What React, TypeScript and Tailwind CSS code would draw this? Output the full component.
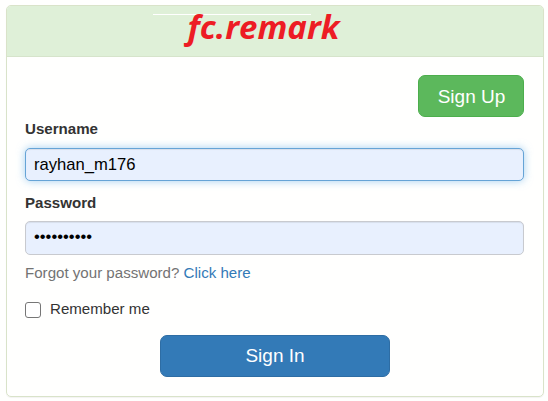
const fields = [
  {
    id: 'username',
    label: 'Username',
    type: 'text',
    value: 'rayhan_m176',
    className: 'mt-[9px] h-[33px] border-[#66a4d6] text-[16.6px] shadow-[inset_0_1px_1px_rgba(0,0,0,0.075),0_0_8px_rgba(102,175,233,0.6)]',
  },
  {
    id: 'password',
    label: 'Password',
    type: 'password',
    value: 'remark2024',
    className: 'mt-2 h-[34px] border-[#c8cacf] pb-[3px] text-[16.6px] shadow-[inset_0_1px_1px_rgba(0,0,0,0.075)]',
  },
]

function Logo() {
  return (
    <svg width="200" height="50" viewBox="0 0 200 50" className="ml-[145px] overflow-visible">
      <rect x="1" y="8" width="158" height="1" fill="#fff" />
      <text
        x="35.5"
        y="32.5"
        textLength="152"
        lengthAdjust="spacingAndGlyphs"
        fill="#ed1c24"
        className="font-['Open_Sans',sans-serif] text-[32px] font-bold italic"
      >
        fc.remark
      </text>
    </svg>
  )
}

export default function App() {
  return (
    <div className="h-[401px] bg-[#fffffe] pt-[5px] pl-[6px] font-['Liberation_Sans',Arial,sans-serif] text-[15.1px] leading-5 text-[#333]">
      <div className="flex h-[392px] w-[538px] flex-col rounded-[5px] border border-[#d9e3c9] shadow-[0_1px_1px_rgba(0,0,0,0.05)]">
        <header className="h-[51px] shrink-0 rounded-t-[4px] border-b border-[#d6e4cb] bg-[#dff0d8]">
          <Logo />
        </header>
        <form className="flex flex-col pt-[18px] pr-[19px] pl-[18px]">
          <button
            type="button"
            className="h-[42px] w-[106px] self-end rounded-[7px] border border-[#4cae4c] bg-[#5cb85c] pt-px pl-px text-[19px] text-white"
          >
            Sign Up
          </button>
          <div className="mt-[2px] flex flex-col gap-3">
            {fields.map((field) => (
              <div key={field.id} className="flex flex-col">
                <label htmlFor={field.id} className="font-bold">
                  {field.label}
                </label>
                <input
                  id={field.id}
                  type={field.type}
                  defaultValue={field.value}
                  className={`w-full rounded-[5px] border bg-[#e8f0fe] px-2 text-black outline-none ${field.className}`}
                />
              </div>
            ))}
          </div>
          <p className="mt-2 text-[#737373]">
            Forgot your password? <a href="#" className="text-[#337ab7]">Click here</a>
          </p>
          <label className="mt-4 flex gap-[9px]">
            <input
              type="checkbox"
              className="mt-[3px] size-4 appearance-none rounded-[3px] border border-[#767676] bg-white"
            />
            Remember me
          </label>
          <button
            type="button"
            className="mt-4 ml-[135px] h-[42px] w-[230px] rounded-[7px] border border-[#2e6da4] bg-[#337ab7] text-[19px] text-white"
          >
            Sign In
          </button>
        </form>
      </div>
    </div>
  )
}
